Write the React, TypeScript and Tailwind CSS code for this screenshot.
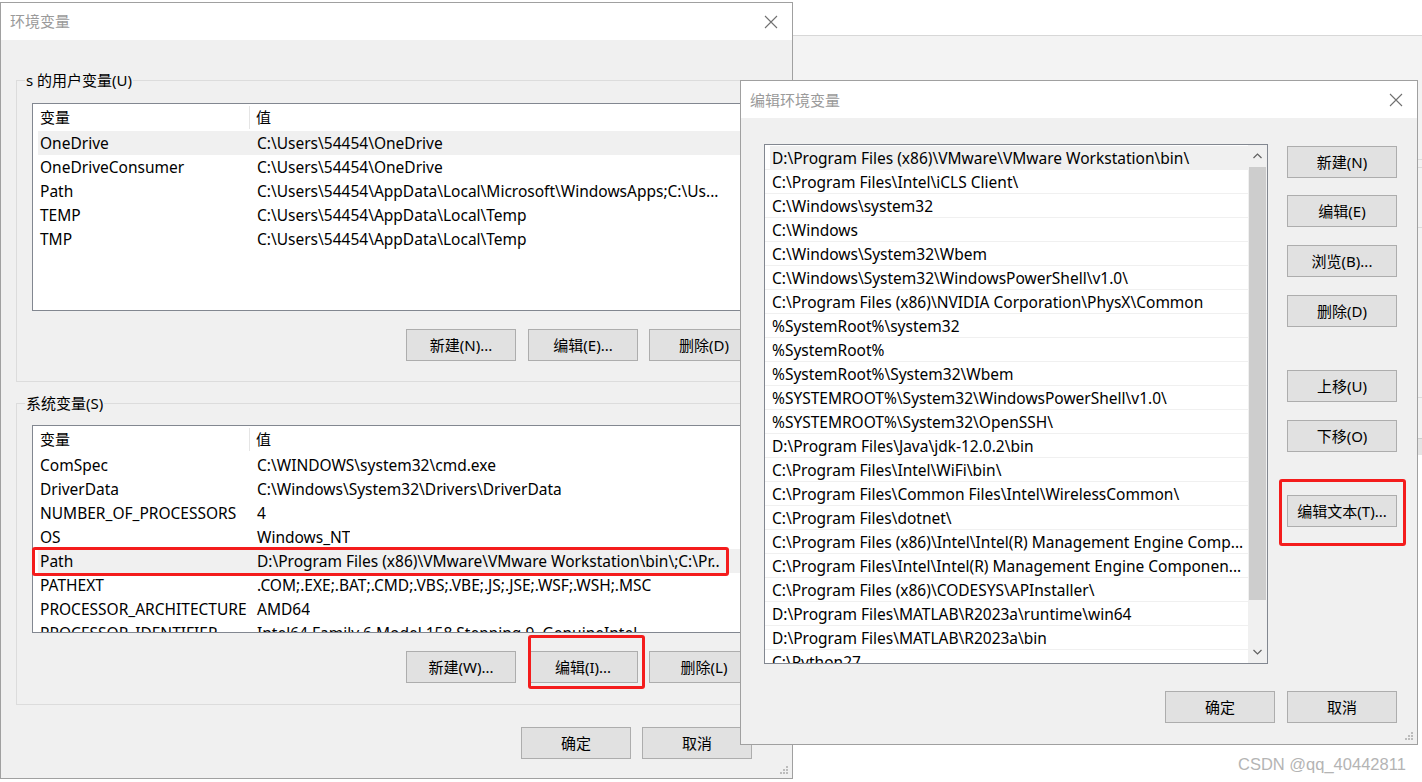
import clsx from "clsx";

const font = "font-[Noto_Sans,Noto_Sans_CJK_SC,sans-serif]";

const userVars: [string, string][] = [
  ["OneDrive", "C:\\Users\\54454\\OneDrive"],
  ["OneDriveConsumer", "C:\\Users\\54454\\OneDrive"],
  ["Path", "C:\\Users\\54454\\AppData\\Local\\Microsoft\\WindowsApps;C:\\Us..."],
  ["TEMP", "C:\\Users\\54454\\AppData\\Local\\Temp"],
  ["TMP", "C:\\Users\\54454\\AppData\\Local\\Temp"],
];

const systemVars: [string, string][] = [
  ["ComSpec", "C:\\WINDOWS\\system32\\cmd.exe"],
  ["DriverData", "C:\\Windows\\System32\\Drivers\\DriverData"],
  ["NUMBER_OF_PROCESSORS", "4"],
  ["OS", "Windows_NT"],
  ["Path", "D:\\Program Files (x86)\\VMware\\VMware Workstation\\bin\\;C:\\Pr.."],
  ["PATHEXT", ".COM;.EXE;.BAT;.CMD;.VBS;.VBE;.JS;.JSE;.WSF;.WSH;.MSC"],
  ["PROCESSOR_ARCHITECTURE", "AMD64"],
  ["PROCESSOR_IDENTIFIER", "Intel64 Family 6 Model 158 Stepping 9, GenuineIntel"],
];

const paths = [
  "D:\\Program Files (x86)\\VMware\\VMware Workstation\\bin\\",
  "C:\\Program Files\\Intel\\iCLS Client\\",
  "C:\\Windows\\system32",
  "C:\\Windows",
  "C:\\Windows\\System32\\Wbem",
  "C:\\Windows\\System32\\WindowsPowerShell\\v1.0\\",
  "C:\\Program Files (x86)\\NVIDIA Corporation\\PhysX\\Common",
  "%SystemRoot%\\system32",
  "%SystemRoot%",
  "%SystemRoot%\\System32\\Wbem",
  "%SYSTEMROOT%\\System32\\WindowsPowerShell\\v1.0\\",
  "%SYSTEMROOT%\\System32\\OpenSSH\\",
  "D:\\Program Files\\Java\\jdk-12.0.2\\bin",
  "C:\\Program Files\\Intel\\WiFi\\bin\\",
  "C:\\Program Files\\Common Files\\Intel\\WirelessCommon\\",
  "C:\\Program Files\\dotnet\\",
  "C:\\Program Files (x86)\\Intel\\Intel(R) Management Engine Comp...",
  "C:\\Program Files\\Intel\\Intel(R) Management Engine Componen...",
  "C:\\Program Files (x86)\\CODESYS\\APInstaller\\",
  "D:\\Program Files\\MATLAB\\R2023a\\runtime\\win64",
  "D:\\Program Files\\MATLAB\\R2023a\\bin",
  "C:\\Python27",
];

const Btn = ({ children, className }: { children: React.ReactNode; className?: string }) => (
  <div
    className={clsx(
      "flex h-[32px] w-[110px] shrink-0 items-center justify-center border border-[#adadad] bg-[#e1e1e1] text-[15px] leading-none text-black",
      className,
    )}
  >
    {children}
  </div>
);

const CloseX = () => (
  <svg width="14" height="14" viewBox="0 0 14 14" className="shrink-0">
    <path d="M1 1L13 13M13 1L1 13" stroke="#707070" strokeWidth="1.1" fill="none" />
  </svg>
);

const Grip = ({ className }: { className?: string }) => (
  <svg width="9" height="9" viewBox="0 0 9 9" className={className}>
    {[
      [6, 0],
      [3, 3],
      [6, 3],
      [0, 6],
      [3, 6],
      [6, 6],
    ].map(([x, y]) => (
      <rect key={`${x}-${y}`} x={x} y={y} width="2" height="2" fill="#bcbcbc" />
    ))}
  </svg>
);

const VarTable = ({ rows, selected }: { rows: [string, string][]; selected: number }) => (
  <div className="h-[208px] w-[728px] overflow-hidden border border-[#828790] bg-white text-[15.5px]">
    <div className="flex h-[27px] items-center pl-[5px] text-[15px]">
      <div className="flex h-[23px] w-[212px] items-center border-r border-[#e5e5e5] pl-[2px]">变量</div>
      <div className="pl-[6px]">值</div>
    </div>
    <div className="pl-[5px]">
      {rows.map(([name, value], i) => (
        <div
          key={name + i}
          className={clsx(
            "flex h-[24px] items-center whitespace-nowrap pt-[2px]",
            i === selected && "bg-[#f0f0f0]",
          )}
        >
          <div className="w-[212px] shrink-0 overflow-hidden pl-[2px]">{name}</div>
          <div className="overflow-hidden pl-[7px]">{value}</div>
        </div>
      ))}
    </div>
  </div>
);

const Group = ({
  label,
  children,
  top,
}: {
  label: string;
  children: React.ReactNode;
  top: string;
}) => (
  <div className={clsx("relative h-[302px] w-[761px] border border-[#dcdcdc] px-[15px]", top)}>
    <div className="absolute -top-[12px] left-[8px] bg-[#f0f0f0] px-[1px] leading-[22px]">{label}</div>
    {children}
  </div>
);

const Chevron = ({ up }: { up?: boolean }) => (
  <svg width="9" height="6" viewBox="0 0 9 6">
    <path d={up ? "M0.5 5L4.5 1L8.5 5" : "M0.5 1L4.5 5L8.5 1"} stroke="#606060" strokeWidth="1.2" fill="none" />
  </svg>
);

export default function App() {
  return (
    <div className={clsx("relative h-[782px] w-[1422px] overflow-hidden bg-white text-[15px] text-black", font)}>
      {/* window behind */}
      <div className="absolute left-[792px] right-0 top-[35px] h-[420px] border-t border-[#d7d7d7] bg-[#f3f3f3]">
        <div className="absolute right-0 top-[123px] h-px w-[10px] bg-[#dcdcdc]" />
        <div className="absolute right-0 top-[131px] h-px w-[10px] bg-[#dcdcdc]" />
        <div className="absolute right-0 top-[191px] h-px w-[10px] bg-[#dcdcdc]" />
        <div className="absolute right-0 top-[361px] h-px w-[10px] bg-[#dcdcdc]" />
        <div className="absolute right-0 top-[402px] h-[17px] w-[10px] border-t border-[#cfcfcf] bg-[#e5e5e5]" />
      </div>

      {/* 环境变量 */}
      <div className="absolute left-0 top-[2px] flex h-[777px] w-[793px] flex-col border border-[#a0a0a0] bg-[#f0f0f0]">
        <div className="flex h-[37px] shrink-0 items-center justify-between bg-white pl-[9px] pr-[14px]">
          <span className="text-[#9a9a9a]">环境变量</span>
          <CloseX />
        </div>
        <div className="relative flex-1 px-[15px]">
          <Group label="s 的用户变量(U)" top="mt-[40px] pt-[22px]">
            <VarTable rows={userVars} selected={0} />
            <div className="mt-[18px] flex w-[727px] justify-end gap-[12px]">
              <Btn>新建(N)...</Btn>
              <Btn className="mr-[-1px]">编辑(E)...</Btn>
              <Btn>删除(D)</Btn>
            </div>
          </Group>
          <Group label="系统变量(S)" top="mt-[21px] pt-[21px]">
            <VarTable rows={systemVars} selected={4} />
            <div className="mt-[18px] flex w-[727px] justify-end gap-[12px]">
              <Btn>新建(W)...</Btn>
              <Btn className="mr-[-1px]">编辑(I)...</Btn>
              <Btn>删除(L)</Btn>
            </div>
          </Group>
          <div className="mt-[22px] flex gap-[11px] pl-[505px]">
            <Btn>确定</Btn>
            <Btn>取消</Btn>
          </div>
          <Grip className="absolute bottom-[3px] right-[3px]" />
        </div>
      </div>

      {/* 编辑环境变量 */}
      <div className="absolute left-[740px] top-[80px] flex h-[665px] w-[678px] flex-col border border-[#a0a0a0] bg-[#f0f0f0]">
        <div className="flex h-[37px] shrink-0 items-center justify-between bg-white pl-[9px] pr-[14px]">
          <span className="pt-[2px] text-[#9a9a9a]">编辑环境变量</span>
          <CloseX />
        </div>
        <div className="relative flex-1 pl-[23px]">
          <div className="mt-[26px] flex">
            <div className="flex h-[520px] w-[504px] overflow-hidden border border-[#828790] bg-white text-[15.5px]">
              <div className="flex-1 overflow-hidden pt-[1px]">
                {paths.map((p, i) => (
                  <div key={p} className="h-[24px] border-b border-[#f0f0f0]">
                    <div
                      className={clsx(
                        "ml-[5px] flex h-[23px] items-center whitespace-nowrap pl-[2px] pt-[2px]",
                        i === 0 && "bg-[#f0f0f0]",
                      )}
                    >
                      {p}
                    </div>
                  </div>
                ))}
              </div>
              <div className="flex w-[19px] shrink-0 flex-col bg-[#f0f0f0]">
                <div className="flex h-[22px] items-center justify-center">
                  <Chevron up />
                </div>
                <div className="mx-[1px] h-[433px] bg-[#cdcdcd]" />
                <div className="flex-1" />
                <div className="flex h-[22px] items-center justify-center">
                  <Chevron />
                </div>
              </div>
            </div>
            <div className="ml-[19px] mt-[2px] flex flex-col">
              <Btn>新建(N)</Btn>
              <Btn className="mt-[17px]">编辑(E)</Btn>
              <Btn className="mt-[18px]">浏览(B)...</Btn>
              <Btn className="mt-[18px]">删除(D)</Btn>
              <Btn className="mt-[43px]">上移(U)</Btn>
              <Btn className="mt-[18px]">下移(O)</Btn>
              <Btn className="mt-[43px]">编辑文本(T)...</Btn>
            </div>
          </div>
          <div className="mt-[27px] flex gap-[12px] pl-[401px]">
            <Btn>确定</Btn>
            <Btn>取消</Btn>
          </div>
          <Grip className="absolute bottom-[3px] right-[3px]" />
        </div>
      </div>

      {/* annotations */}
      <div className="absolute left-[32px] top-[547px] h-[29px] w-[697px] rounded-[3px] border-[3px] border-[#f41c1c]" />
      <div className="absolute left-[528px] top-[635px] h-[54px] w-[117px] rounded-[3px] border-[3px] border-[#f41c1c]" />
      <div className="absolute left-[1279px] top-[479px] h-[67px] w-[127px] rounded-[3px] border-[3px] border-[#f41c1c]" />

      <div className="absolute left-[1238px] top-[753px] font-[Liberation_Sans,sans-serif] text-[16.5px] leading-[22px] text-[#b4b4b4]">
        CSDN @qq_40442811
      </div>
    </div>
  );
}
